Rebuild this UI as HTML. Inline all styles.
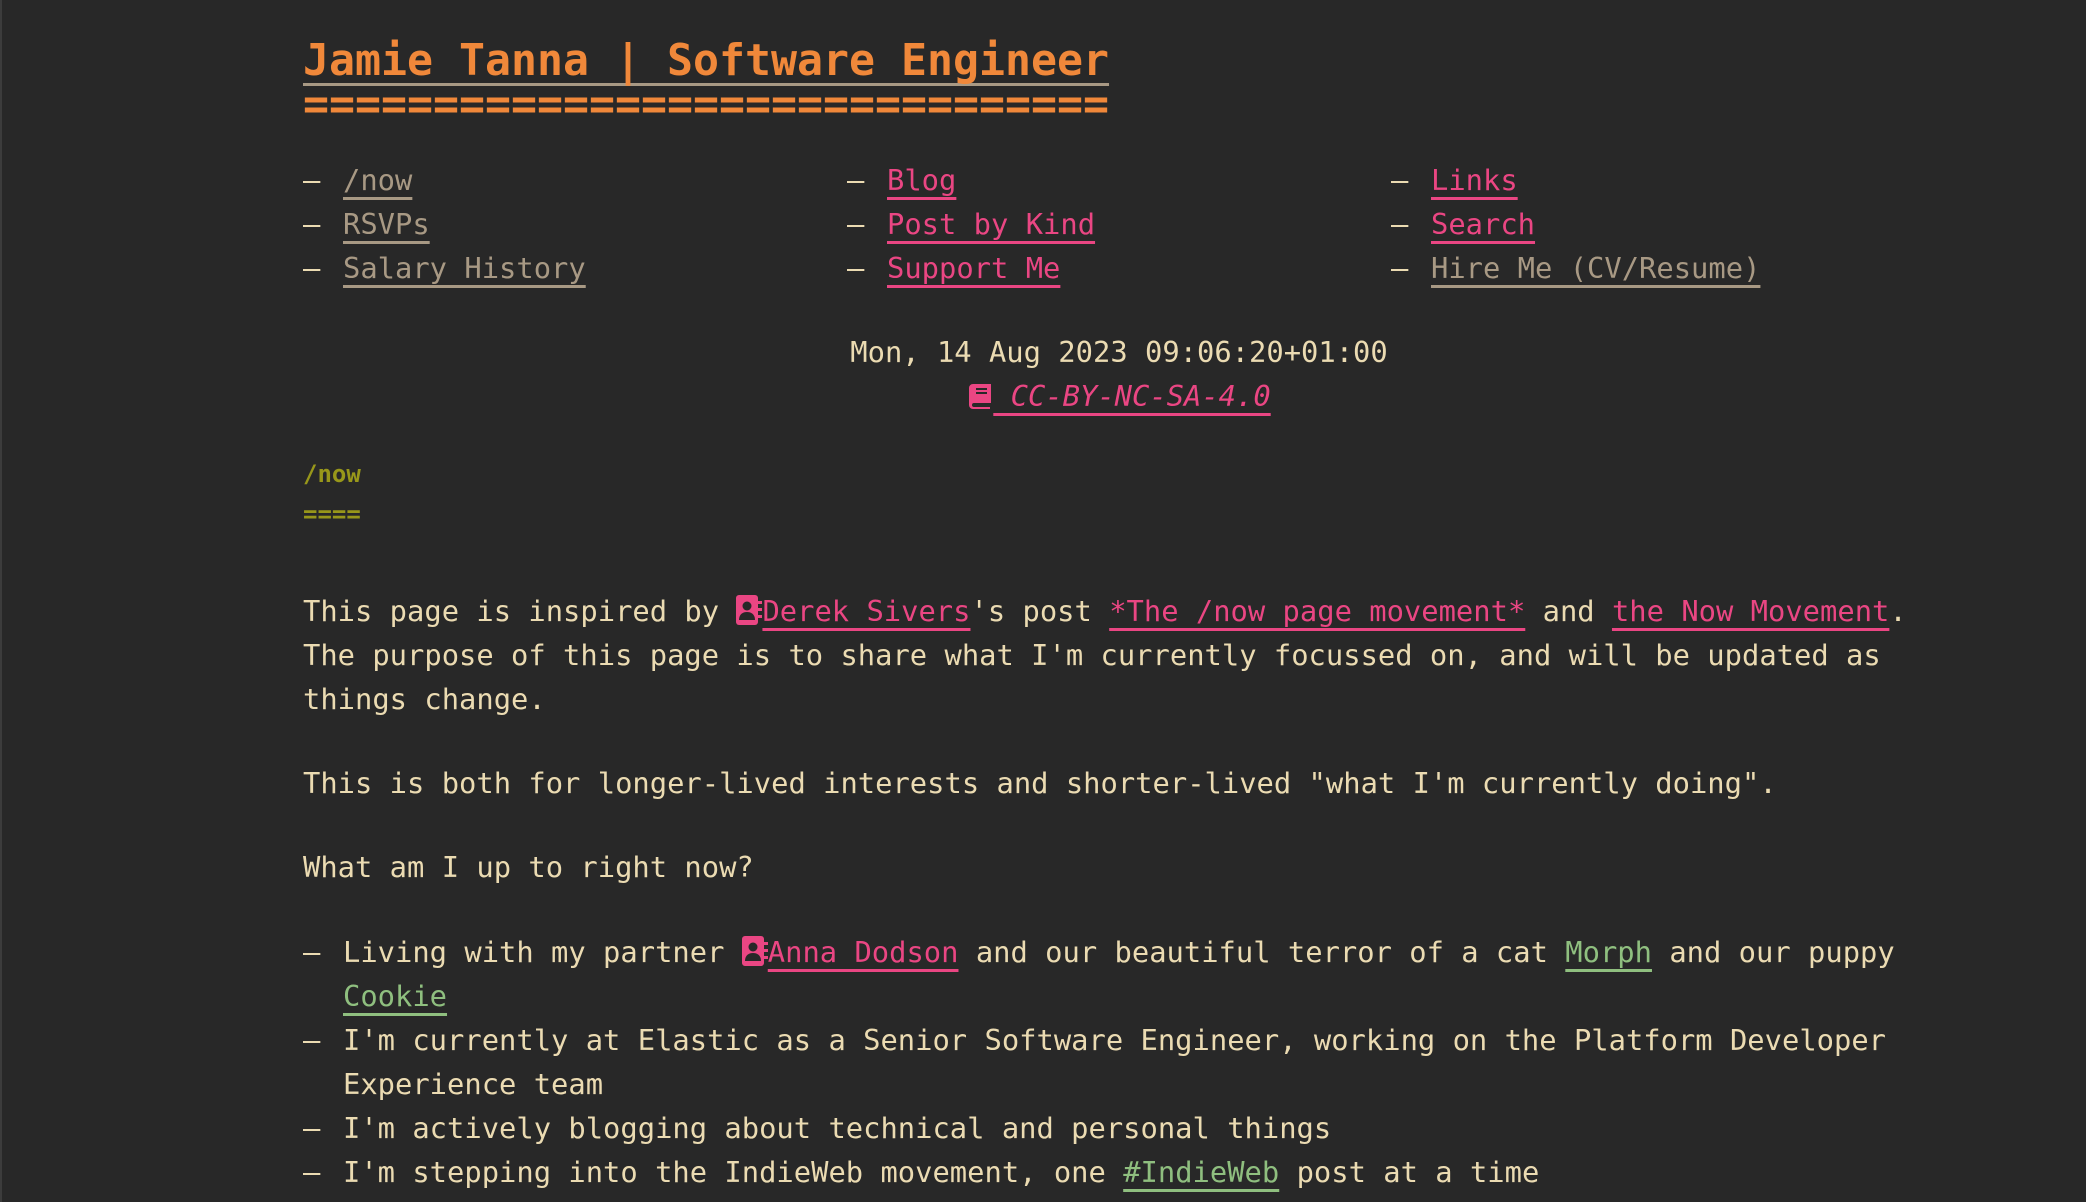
<!DOCTYPE html>
<html><head><meta charset="utf-8"><style>
html,body{margin:0;padding:0;background:#282828;width:2086px;height:1202px;overflow:hidden}
body{font-family:"DejaVu Sans Mono","Liberation Mono",monospace;color:#ebdbb2;font-size:28.8px;line-height:44px;border-left:2px solid #3c3c3c;box-sizing:border-box;position:relative}
.a{position:absolute;left:301px;width:1632px;white-space:nowrap}
a{text-decoration:underline;text-decoration-thickness:3px;text-underline-offset:7px;text-decoration-skip-ink:none}
.p{color:#ea4683;text-decoration-color:#ea4683}
.g{color:#a89984;text-decoration-color:#a89984}
.gr{color:#8fbf7f;text-decoration-color:#8fbf7f}
.title{font-size:43.2px;line-height:60px;font-weight:bold;color:#f0883a}
.title span{text-decoration:underline;text-decoration-color:#a89984;text-decoration-thickness:3px;text-underline-offset:8px;text-decoration-skip-ink:none}
.col{position:absolute;width:544px}
.li{position:relative;padding-left:40px}
.li:before{content:"–";position:absolute;left:0}
.h{font-size:24px;line-height:40px;font-weight:bold;color:#98971a}
svg{vertical-align:-4px}
</style></head><body>
<div class="a title" style="top:31px"><span>Jamie Tanna | Software Engineer</span></div>
<div class="a title" style="top:75px">===============================</div>

<div class="a" style="top:158px">
 <div class="col" style="left:0">
  <div class="li"><a class="g">/now</a></div>
  <div class="li"><a class="g">RSVPs</a></div>
  <div class="li"><a class="g">Salary History</a></div>
 </div>
 <div class="col" style="left:544px">
  <div class="li"><a class="p">Blog</a></div>
  <div class="li"><a class="p">Post by Kind</a></div>
  <div class="li"><a class="p">Support Me</a></div>
 </div>
 <div class="col" style="left:1088px">
  <div class="li"><a class="p">Links</a></div>
  <div class="li"><a class="p">Search</a></div>
  <div class="li"><a class="g">Hire Me (CV/Resume)</a></div>
 </div>
</div>

<div class="a" style="top:330px;text-align:center">Mon, 14 Aug 2023 09:06:20+01:00</div>
<div class="a" style="top:374px;text-align:center;font-style:italic"><a class="p"><svg width="26" height="28" viewBox="0 0 26 28"><path d="M6 2h18v19H7a2 2 0 0 0 0 4h16v2H6a4 4 0 0 1-4-4V6a4 4 0 0 1 4-4z" fill="#ea4683"/><rect x="9" y="6" width="11" height="2" fill="#282828"/><rect x="9" y="10" width="11" height="2" fill="#282828"/></svg> CC-BY-NC-SA-4.0</a></div>

<div class="a h" style="top:454px">/now</div>
<div class="a h" style="top:494px">====</div>

<div class="a" style="top:589px">This page is inspired by <a class="p"><svg width="26" height="30" viewBox="0 0 26 30"><rect x="0" y="0" width="22" height="30" rx="3" fill="#ea4683"/><circle cx="11" cy="11" r="4.5" fill="#282828"/><path d="M3 25c0-6 4-8 8-8s8 2 8 8z" fill="#282828"/><rect x="22" y="6" width="4" height="3" fill="#ea4683"/><rect x="22" y="13" width="4" height="3" fill="#ea4683"/><rect x="22" y="20" width="4" height="3" fill="#ea4683"/></svg>Derek Sivers</a>'s post <a class="p">*The /now page movement*</a> and <a class="p">the Now Movement</a>.<br>The purpose of this page is to share what I'm currently focussed on, and will be updated as<br>things change.</div>

<div class="a" style="top:761px">This is both for longer-lived interests and shorter-lived "what I'm currently doing".</div>
<div class="a" style="top:845px">What am I up to right now?</div>

<div class="a" style="top:930px">
 <div class="li">Living with my partner <a class="p"><svg width="26" height="30" viewBox="0 0 26 30"><rect x="0" y="0" width="22" height="30" rx="3" fill="#ea4683"/><circle cx="11" cy="11" r="4.5" fill="#282828"/><path d="M3 25c0-6 4-8 8-8s8 2 8 8z" fill="#282828"/><rect x="22" y="6" width="4" height="3" fill="#ea4683"/><rect x="22" y="13" width="4" height="3" fill="#ea4683"/><rect x="22" y="20" width="4" height="3" fill="#ea4683"/></svg>Anna Dodson</a> and our beautiful terror of a cat <a class="gr">Morph</a> and our puppy<br><a class="gr">Cookie</a></div>
 <div class="li">I'm currently at Elastic as a Senior Software Engineer, working on the Platform Developer<br>Experience team</div>
 <div class="li">I'm actively blogging about technical and personal things</div>
 <div class="li">I'm stepping into the IndieWeb movement, one <a class="gr">#IndieWeb</a> post at a time</div>
</div>
</body></html>
